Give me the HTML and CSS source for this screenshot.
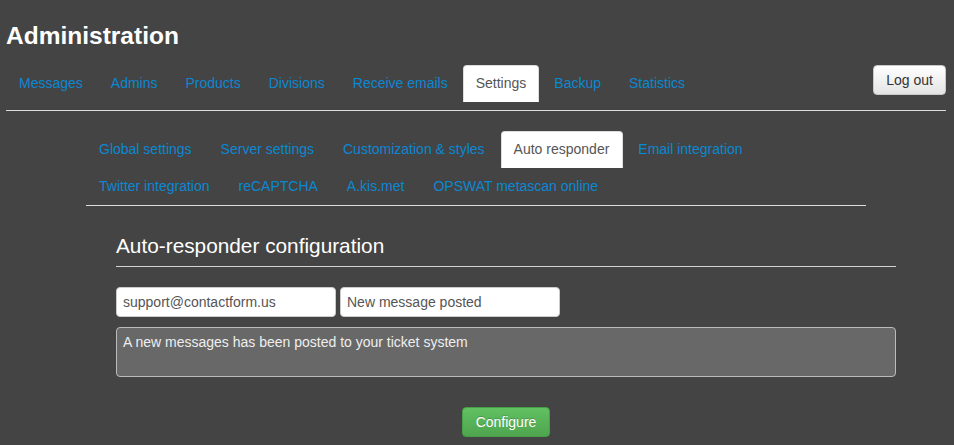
FILE: index.html
```html
<!DOCTYPE html>
<html lang="en">
<head>
<meta charset="utf-8">
<title>Administration</title>
<link rel="stylesheet" href="styles.css">
</head>
<body>
<div class="page">
  <h1 class="title">Administration</h1>
  <div class="topbar">
    <ul class="tabs">
      <li><a href="#">Messages</a></li>
      <li><a href="#">Admins</a></li>
      <li><a href="#">Products</a></li>
      <li><a href="#">Divisions</a></li>
      <li><a href="#">Receive emails</a></li>
      <li><a href="#" class="active">Settings</a></li>
      <li><a href="#">Backup</a></li>
      <li><a href="#">Statistics</a></li>
    </ul>
    <button class="btn btn-default" type="button">Log out</button>
  </div>
  <div class="rule"></div>
  <div class="subnav">
    <ul class="tabs sub-tabs">
      <li><a href="#">Global settings</a></li>
      <li><a href="#">Server settings</a></li>
      <li><a href="#">Customization &amp; styles</a></li>
      <li><a href="#" class="active">Auto responder</a></li>
      <li><a href="#">Email integration</a></li>
      <li><a href="#">Twitter integration</a></li>
      <li><a href="#">reCAPTCHA</a></li>
      <li><a href="#">A.kis.met</a></li>
      <li><a href="#">OPSWAT metascan online</a></li>
    </ul>
  </div>
  <section class="panel">
    <h2 class="panel-title">Auto-responder configuration</h2>
    <div class="fields">
      <input class="field" type="text" value="support@contactform.us">
      <input class="field" type="text" value="New message posted">
    </div>
    <textarea class="message">A new messages has been posted to your ticket system</textarea>
    <div class="actions">
      <button class="btn btn-success" type="button">Configure</button>
    </div>
  </section>
</div>
</body>
</html>
```
FILE: styles.css
```css
html, body {
  margin: 0;
  padding: 0;
  background: #444444;
}

body {
  font-family: "Liberation Sans", Arial, sans-serif;
  font-size: 14px;
  line-height: 20px;
  color: #333;
}

.page {
  padding: 0 8px 0 6px;
}

.title {
  margin: 21px 0 0;
  font-size: 24.5px;
  line-height: 30px;
  font-weight: bold;
  color: #ffffff;
}

.topbar {
  margin-top: 14px;
  display: flex;
  justify-content: space-between;
  align-items: flex-start;
}

.tabs {
  list-style: none;
  margin: 0;
  padding: 0;
  display: flex;
  flex-wrap: wrap;
}

.tabs li {
  margin-right: 2px;
}

.tabs a {
  display: block;
  padding: 7px 12px 8px;
  border: 1px solid transparent;
  border-radius: 4px 4px 0 0;
  line-height: 20px;
  color: #0b88d2;
  text-decoration: none;
}

.sub-tabs a {
  padding-right: 13px;
}

.tabs a.active {
  background: #ffffff;
  border-color: #dddddd #dddddd transparent;
  color: #555555;
}

.rule {
  margin-top: 8px;
  height: 1px;
  background: #dddddd;
}

.subnav {
  margin: 20px 0 0 80px;
  width: 780px;
}

.sub-tabs {
  border-bottom: 1px solid #dddddd;
}

.panel {
  margin-left: 110px;
  width: 780px;
}

.panel-title {
  margin: 28px 0 0;
  padding-bottom: 8px;
  border-bottom: 1px solid #d4d4d4;
  font-size: 20.8px;
  line-height: 24px;
  font-weight: normal;
  color: #ffffff;
}

.fields {
  margin-top: 20px;
  display: flex;
  gap: 4px;
}

.field {
  box-sizing: border-box;
  width: 220px;
  height: 30px;
  margin: 0;
  padding: 4px 6px;
  border: 1px solid #cccccc;
  border-radius: 4px;
  background: #ffffff;
  font-family: inherit;
  font-size: 14px;
  line-height: 20px;
  color: #555555;
}

.message {
  display: block;
  box-sizing: border-box;
  width: 780px;
  height: 50px;
  margin: 10px 0 0;
  padding: 4px 6px;
  border: 1px solid #bbbbbb;
  border-radius: 4px;
  background: #686868;
  font-family: inherit;
  font-size: 14px;
  line-height: 20px;
  color: #eeeeee;
  resize: none;
}

.actions {
  margin-top: 30px;
  display: flex;
  justify-content: center;
}

.btn {
  box-sizing: border-box;
  height: 30px;
  margin: 0;
  padding: 4px 12px;
  border: 1px solid #cccccc;
  border-radius: 4px;
  font-family: inherit;
  font-size: 14px;
  line-height: 20px;
  cursor: pointer;
}

.btn-default {
  background: linear-gradient(to bottom, #ffffff 0%, #e4e4e4 100%);
  border-color: #c8c8c8;
  color: #333333;
}

.btn-success {
  padding: 4px 13px;
  background: linear-gradient(to bottom, #62c062 0%, #4ea54e 100%);
  border-color: #47a047;
  color: #ffffff;
  text-shadow: 0 -1px 0 rgba(0, 0, 0, 0.2);
}
```
